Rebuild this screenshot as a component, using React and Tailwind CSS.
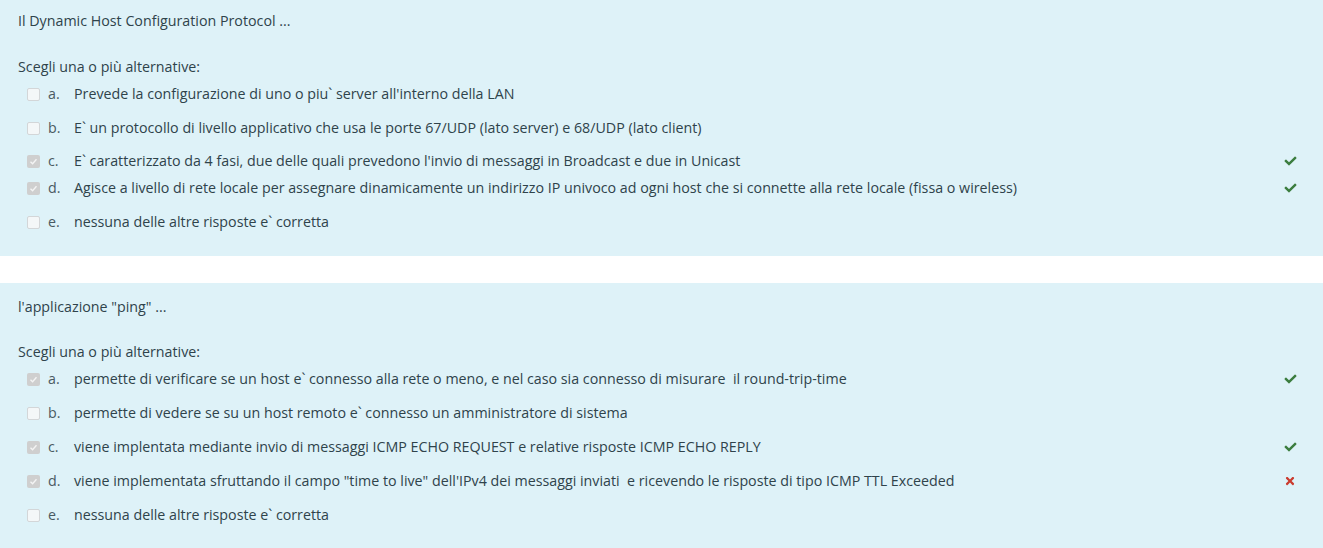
import { FaCheck, FaTimes } from "react-icons/fa";

const questions = [
  {
    title: "Il Dynamic Host Configuration Protocol ...",
    pt: "pt-[11px]",
    gap: "mt-[26px]",
    pb: "pb-[17px]",
    answers: [
      { l: "a.", t: "Prevede la configurazione di uno o piu` server all'interno della LAN", h: "h-[34px]" },
      { l: "b.", t: "E` un protocollo di livello applicativo che usa le porte 67/UDP (lato server) e 68/UDP (lato client)", h: "h-[34px]" },
      { l: "c.", t: "E` caratterizzato da 4 fasi, due delle quali prevedono l'invio di messaggi in Broadcast e due in Unicast", h: "h-[32px]", checked: true, mark: "ok" },
      { l: "d.", t: "Agisce a livello di rete locale per assegnare dinamicamente un indirizzo IP univoco ad ogni host che si connette alla rete locale (fissa o wireless)", h: "h-[22px]", checked: true, mark: "ok" },
      { l: "e.", t: "nessuna delle altre risposte e` corretta", h: "h-[34px] mt-[6px]" },
    ],
  },
  {
    title: "l'applicazione \"ping\" ...",
    pt: "pt-[14px]",
    gap: "mt-[25px]",
    pb: "pb-[16px]",
    answers: [
      { l: "a.", t: "permette di verificare se un host e` connesso alla rete o meno, e nel caso sia connesso di misurare  il round-trip-time", h: "h-[34px]", checked: true, mark: "ok" },
      { l: "b.", t: "permette di vedere se su un host remoto e` connesso un amministratore di sistema", h: "h-[34px]" },
      { l: "c.", t: "viene implentata mediante invio di messaggi ICMP ECHO REQUEST e relative risposte ICMP ECHO REPLY", h: "h-[34px]", checked: true, mark: "ok" },
      { l: "d.", t: "viene implementata sfruttando il campo \"time to live\" dell'IPv4 dei messaggi inviati  e ricevendo le risposte di tipo ICMP TTL Exceeded", h: "h-[34px]", checked: true, mark: "bad" },
      { l: "e.", t: "nessuna delle altre risposte e` corretta", h: "h-[34px]" },
    ],
  },
];

function Box({ checked }) {
  return checked ? (
    <span className="flex h-[13px] w-[13px] items-center justify-center rounded-[2px] bg-[#cfcfcf]">
      <svg viewBox="0 0 12 12" className="h-[9px] w-[9px]">
        <path d="M2 6.2 L4.8 9 L10 3" fill="none" stroke="#f4f4f4" strokeWidth="1.8" />
      </svg>
    </span>
  ) : (
    <span className="h-[13px] w-[13px] rounded-[2px] border border-[#d3d6d8] bg-[#f4f7f8]" />
  );
}

function Question({ q }) {
  return (
    <div className={`bg-[#def2f8] px-[18px] ${q.pt} ${q.pb}`}>
      <div className="leading-[20px]">{q.title}</div>
      <div className={`${q.gap} leading-[20px]`}>Scegli una o più alternative:</div>
      <div className="flex flex-col">
        {q.answers.map((a) => (
          <div key={a.l} className={`flex items-center ${a.h}`}>
            <span className="ml-[9px] flex w-[13px] justify-center">
              <Box checked={a.checked} />
            </span>
            <span className="ml-[8px] w-[26px] text-[#4a5a62]">{a.l}</span>
            <span className="flex-1 whitespace-pre">{a.t}</span>
            <span className="mr-[8px] flex w-[14px] justify-center">
              {a.mark === "ok" && <FaCheck className="h-[12px] w-[13px] text-[#3b7d3f]" />}
              {a.mark === "bad" && <FaTimes className="h-[12px] w-[10px] text-[#ca3b2e]" />}
            </span>
          </div>
        ))}
      </div>
    </div>
  );
}

export default function App() {
  return (
    <div className="min-h-screen bg-white font-['Open_Sans',sans-serif] text-[14.25px] text-[#2f434b]">
      <Question q={questions[0]} />
      <div className="h-[27px]" />
      <Question q={questions[1]} />
    </div>
  );
}
